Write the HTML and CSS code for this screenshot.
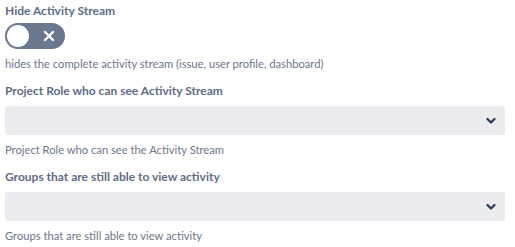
FILE: index.html
```html
<!DOCTYPE html>
<html lang="en">
<head>
  <meta charset="UTF-8">
  <title>Activity Stream settings</title>
  <link rel="stylesheet" href="styles.css">
</head>
<body>
  <form class="settings" onsubmit="return false;">
    <div class="field">
      <label class="field-label">Hide Activity Stream</label>
      <div class="toggle">
        <span class="toggle-knob"></span>
        <svg class="toggle-icon" width="12" height="12" viewBox="0 0 12 12">
          <path d="M2 2 L10 10 M10 2 L2 10" stroke="#fff" stroke-width="2.4" stroke-linecap="round"/>
        </svg>
      </div>
      <div class="field-help">hides the complete activity stream (issue, user profile, dashboard)</div>
    </div>

    <div class="field">
      <label class="field-label">Project Role who can see Activity Stream</label>
      <div class="select">
        <svg class="chevron" width="10" height="8" viewBox="0 0 10 8">
          <path d="M1.5 2 L5 5.5 L8.5 2" fill="none" stroke="#253858" stroke-width="2.2" stroke-linecap="round" stroke-linejoin="round"/>
        </svg>
      </div>
      <div class="field-help">Project Role who can see the Activity Stream</div>
    </div>

    <div class="field">
      <label class="field-label">Groups that are still able to view activity</label>
      <div class="select">
        <svg class="chevron" width="10" height="8" viewBox="0 0 10 8">
          <path d="M1.5 2 L5 5.5 L8.5 2" fill="none" stroke="#253858" stroke-width="2.2" stroke-linecap="round" stroke-linejoin="round"/>
        </svg>
      </div>
      <div class="field-help">Groups that are still able to view activity</div>
    </div>
  </form>
</body>
</html>
```

FILE: styles.css
```css
body {
  margin: 0;
  padding: 3px 10px 0 5px;
  background: #fff;
  font-family: 'Lato', 'Open Sans', sans-serif;
}
.settings {
  display: flex;
  flex-direction: column;
  gap: 11px;
}
.field {
  display: flex;
  flex-direction: column;
  gap: 7px;
}
.field-label {
  color: #5e6c84;
  font-size: 12px;
  font-weight: bold;
  line-height: 16px;
}
.field-help {
  color: #6b778c;
  font-size: 11.2px;
  line-height: 16px;
}
.toggle {
  width: 60px;
  height: 26px;
  border-radius: 13px;
  background: #6b778c;
  display: flex;
  align-items: center;
  justify-content: space-between;
  padding: 0 10px 0 2px;
  box-sizing: border-box;
  margin-top: -3px;
}
.toggle-knob {
  width: 22px;
  height: 22px;
  border-radius: 50%;
  background: #fff;
}
.select {
  height: 29px;
  border-radius: 3px;
  background: #ebecf0;
  display: flex;
  align-items: center;
  justify-content: flex-end;
  padding-right: 9px;
}
```
